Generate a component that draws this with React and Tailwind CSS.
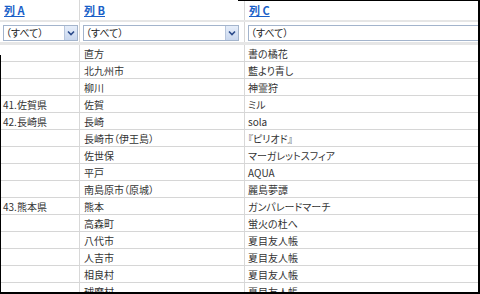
import React from 'react';

const rows = [
  ['', '直方', '書の橘花'],
  ['', '北九州市', '藍より青し'],
  ['', '柳川', '神霊狩'],
  ['41.佐賀県', '佐賀', 'ミル'],
  ['42.長崎県', '長崎', 'sola'],
  ['', '長崎市（伊王島）', '『ピリオド』'],
  ['', '佐世保', 'マーガレットスフィア'],
  ['', '平戸', 'AQUA'],
  ['', '南島原市（原城）', '麗島夢譚'],
  ['43.熊本県', '熊本', 'ガンパレードマーチ'],
  ['', '高森町', '蛍火の杜へ'],
  ['', '八代市', '夏目友人帳'],
  ['', '人吉市', '夏目友人帳'],
  ['', '相良村', '夏目友人帳'],
  ['', '球磨村', '夏目友人帳'],
];

const cols = 'grid grid-cols-[80px_165px_1fr]';

function Chevron() {
  return (
    <svg width="8" height="6" viewBox="0 0 8 6">
      <path d="M1 1.5 L4 4.5 L7 1.5" fill="none" stroke="#2a4a8a" strokeWidth="1.6" />
    </svg>
  );
}

function Select({ width, button = true }) {
  return (
    <div
      className="h-[16px] border border-[#a3b4cc] bg-white flex items-center justify-between shrink-0"
      style={{ width }}
    >
      <span className="pl-[2px] text-[10px] leading-none text-[#222]">（すべて）</span>
      {button && (
        <span className="w-[13px] h-[14px] mr-[0px] bg-gradient-to-b from-[#e6eefa] to-[#c9d7ee] border-l border-[#b8c6dc] flex items-center justify-center">
          <Chevron />
        </span>
      )}
    </div>
  );
}

export default function App() {
  return (
    <div
      className="relative w-[480px] h-[294px] overflow-hidden bg-white border-r-2 border-b-2 border-black [font-feature-settings:'palt']"
      style={{ fontFamily: '"Noto Sans CJK JP", "Liberation Sans", sans-serif' }}
    >
      <div className="absolute left-[238px] right-0 top-0 h-px bg-black" />
      <div className="absolute left-0 top-[55px] bottom-0 w-px bg-black" />

      {/* header */}
      <div className={`${cols} h-[20px]`}>
        {['列 A', '列 B', '列 C'].map((h, i) => (
          <div key={h} className={`flex items-center pl-[4px] ${i < 2 ? 'border-r border-[#d8d8d8]' : ''}`}>
            <a className="text-[11px] font-bold text-[#1a5fc8] underline leading-none">{h}</a>
          </div>
        ))}
      </div>

      {/* filters */}
      <div className={`${cols} border-t-2 border-b-[3px] border-[#e6e6e6]`}>
        <div className="pt-[3px] pb-[1px] pl-[3px] border-r border-[#d8d8d8]">
          <Select width={75} />
        </div>
        <div className="pt-[3px] pb-[1px] pl-[3px] border-r border-[#d8d8d8]">
          <Select width={156} />
        </div>
        <div className="pt-[3px] pb-[1px] pl-[3px] overflow-hidden">
          <Select width={260} button={false} />
        </div>
      </div>

      {/* rows */}
      {rows.map((r, i) => (
        <div key={i} className={`${cols} h-[17px] border-b border-[#d6d6d6] text-[10px] text-[#333]`}>
          <div className="flex items-center pl-[3px] border-r border-[#d8d8d8] whitespace-nowrap">{r[0]}</div>
          <div className="flex items-center pl-[4px] border-r border-[#d8d8d8] whitespace-nowrap">{r[1]}</div>
          <div className="flex items-center pl-[3px] whitespace-nowrap">{r[2]}</div>
        </div>
      ))}
    </div>
  );
}
